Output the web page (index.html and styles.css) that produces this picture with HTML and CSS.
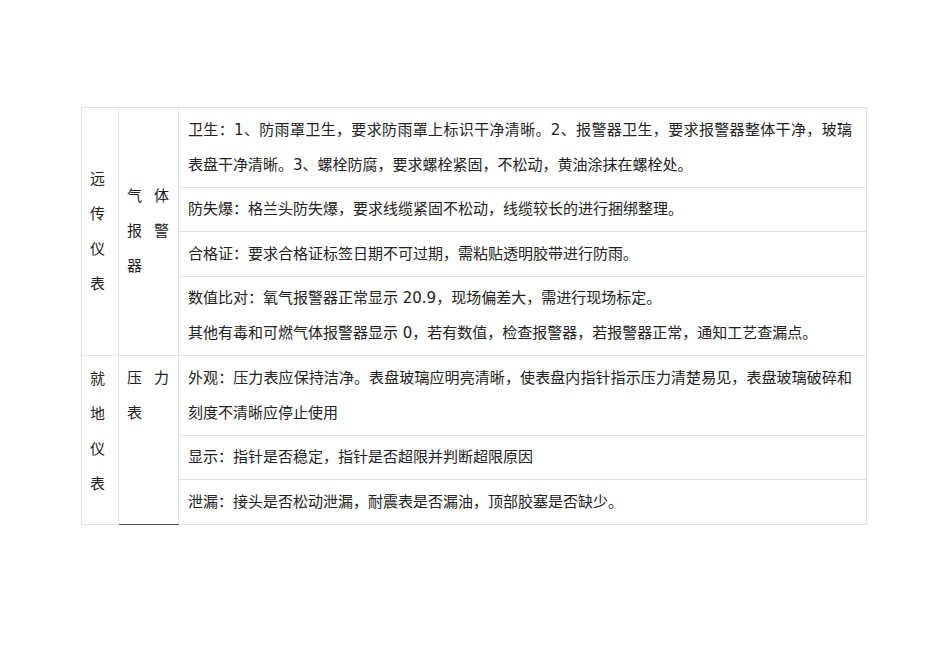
FILE: index.html
```html
<!DOCTYPE html>
<html lang="zh-CN">
<head>
<meta charset="utf-8">
<title>仪表检查标准</title>
<link rel="stylesheet" href="styles.css">
</head>
<body>
<div class="page">
<table class="sheet">
<colgroup><col class="c1"><col class="c2"><col class="c3"></colgroup>
<tbody>
<tr>
<td rowspan="4" class="cat mid">远传仪表</td>
<td rowspan="4" class="dev mid">气体报警器</td>
<td class="item">卫生：1、防雨罩卫生，要求防雨罩上标识干净清晰。2、报警器卫生，要求报警器整体干净，玻璃表盘干净清晰。3、螺栓防腐，要求螺栓紧固，不松动，黄油涂抹在螺栓处。</td>
</tr>
<tr><td class="item">防失爆：格兰头防失爆，要求线缆紧固不松动，线缆较长的进行捆绑整理。</td></tr>
<tr><td class="item">合格证：要求合格证标签日期不可过期，需粘贴透明胶带进行防雨。</td></tr>
<tr><td class="item">数值比对：氧气报警器正常显示 20.9，现场偏差大，需进行现场标定。<br>其他有毒和可燃气体报警器显示 0，若有数值，检查报警器，若报警器正常，通知工艺查漏点。</td></tr>
<tr>
<td rowspan="3" class="cat top">就地仪表</td>
<td rowspan="3" class="dev top dark">压力表</td>
<td class="item">外观：压力表应保持洁净。表盘玻璃应明亮清晰，使表盘内指针指示压力清楚易见，表盘玻璃破碎和刻度不清晰应停止使用</td>
</tr>
<tr><td class="item">显示：指针是否稳定，指针是否超限并判断超限原因</td></tr>
<tr><td class="item">泄漏：接头是否松动泄漏，耐震表是否漏油，顶部胶塞是否缺少。</td></tr>
</tbody>
</table>
</div>
</body>
</html>
```
FILE: styles.css
```css
html, body {
  margin: 0;
  padding: 0;
  background: #ffffff;
}
.page {
  padding: 107px 0 0 81px;
}
.sheet {
  border-collapse: collapse;
  table-layout: fixed;
  width: 785px;
  font-family: "DejaVu Sans", "Noto Sans CJK SC", sans-serif;
  font-size: 15px;
  line-height: 35px;
  color: #222222;
}
.c1 { width: 37px; }
.c2 { width: 60px; }
.c3 { width: 688px; }
.sheet td {
  border: 1px solid #e2e2e2;
  padding: 4.5px 8px 4px 8px;
  text-align: justify;
  word-break: break-all;
}
.sheet td.item {
  padding: 4.5px 14px 4px 9px;
}
.sheet td.dev {
  padding: 4.5px 9px 4px 8px;
}
.mid { vertical-align: middle; }
.top { vertical-align: top; }
.sheet td.cat.top {
  padding-top: 6px;
}
.sheet td.dark {
  border-bottom: 1px solid #555555;
}
```
